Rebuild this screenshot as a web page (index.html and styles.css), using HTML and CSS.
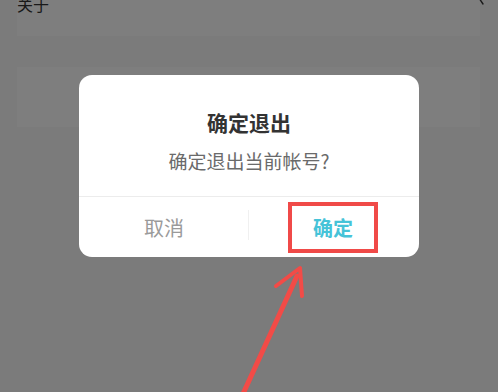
FILE: index.html
```html
<!DOCTYPE html>
<html lang="zh-CN">
<head>
    <meta charset="UTF-8">
    <meta name="viewport" content="width=device-width, initial-scale=1.0">
    <title>确定退出</title>
    <link rel="stylesheet" href="styles.css">
</head>
<body>
    <div class="page">
        <div class="card about-row">
            <span class="row-label">关于</span>
            <svg class="chevron" width="8" height="12" viewBox="0 0 8 12">
                <path d="M1 -1 L5 5" fill="none" stroke="#333" stroke-width="1.4" stroke-linecap="round"/>
            </svg>
        </div>
        <div class="card logout-row"></div>
    </div>

    <div class="mask">
        <div class="dialog">
            <div class="dialog-body">
                <h2 class="dialog-title">确定退出</h2>
                <p class="dialog-text">确定退出当前帐号?</p>
            </div>
            <div class="dialog-actions">
                <button class="dialog-btn cancel-btn">取消</button>
                <button class="dialog-btn confirm-btn"><span class="highlight">确定</span></button>
            </div>
        </div>
    </div>

    <!-- annotation arrow -->
    <svg class="arrow" width="498" height="392" viewBox="0 0 498 392">
        <path d="M242 396 L297 276" fill="none" stroke="#f24b47" stroke-width="5" stroke-linecap="round"/>
        <path d="M276 286 L300 268 L302 296" fill="none" stroke="#f24b47" stroke-width="4" stroke-linecap="round" stroke-linejoin="round"/>
    </svg>
</body>
</html>
```

FILE: styles.css
```css
* {
    margin: 0;
    padding: 0;
    box-sizing: border-box;
}

body {
    font-family: "Noto Sans CJK SC", "Noto Sans", sans-serif;
    width: 498px;
    height: 392px;
    overflow: hidden;
    position: relative;
    background: #f6f6f6;
}

.page {
    display: flex;
    flex-direction: column;
    gap: 31px;
    padding: 0 18px 0 17px;
}

.card {
    background: #fcfcfc;
}

.about-row {
    height: 37px;
    display: flex;
    justify-content: space-between;
    margin-top: -1px;
}

.row-label {
    font-size: 16px;
    line-height: 16px;
    color: #333;
    margin-top: -3px;
}

.chevron {
    margin-right: -6px;
}

.logout-row {
    height: 60px;
}

.mask {
    position: absolute;
    inset: 0;
    background: rgba(0, 0, 0, 0.5);
    display: flex;
    justify-content: center;
    padding-top: 75px;
}

.dialog {
    width: 340px;
    height: 182px;
    background: #ffffff;
    border-radius: 13px;
    display: flex;
    flex-direction: column;
    overflow: hidden;
}

.dialog-body {
    padding: 33px 0 22px;
    text-align: center;
    border-bottom: 1px solid #ececec;
}

.dialog-title {
    font-size: 21px;
    line-height: 28px;
    font-weight: bold;
    color: #333;
    margin-bottom: 12px;
}

.dialog-text {
    font-size: 19px;
    line-height: 26px;
    color: #6a6a6a;
}

.dialog-actions {
    flex: 1;
    display: flex;
    align-items: center;
}

.dialog-btn {
    flex: 1;
    height: 100%;
    border: none;
    background: none;
    font-family: inherit;
    font-size: 20px;
    display: flex;
    align-items: center;
    justify-content: center;
}

.cancel-btn {
    color: #9a9a9a;
    position: relative;
}

.cancel-btn::after {
    content: "";
    position: absolute;
    right: 0;
    top: 13px;
    bottom: 17px;
    width: 1px;
    background: #f0f0f0;
}

.confirm-btn {
    color: #46c3d8;
    font-weight: bold;
}

.highlight {
    width: 90px;
    height: 51px;
    border: 4px solid #f04a48;
    display: flex;
    align-items: center;
    justify-content: center;
    margin-left: -2px;
}

.arrow {
    position: absolute;
    left: 0;
    top: 0;
}
```
